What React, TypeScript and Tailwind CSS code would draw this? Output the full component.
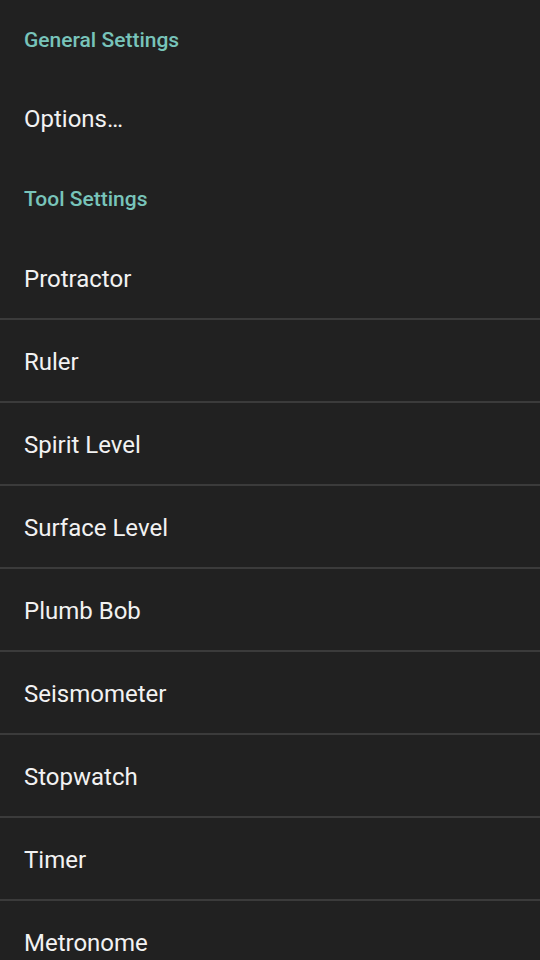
const tools = [
  "Protractor",
  "Ruler",
  "Spirit Level",
  "Surface Level",
  "Plumb Bob",
  "Seismometer",
  "Stopwatch",
  "Timer",
  "Metronome",
];

function Header({ title, tall }: { title: string; tall?: boolean }) {
  return (
    <div
      className={`flex items-center px-6 pt-[5px] text-[21px] font-medium text-[#78c4ba] ${
        tall ? "h-[79px]" : "h-[77px]"
      }`}
    >
      {title}
    </div>
  );
}

function Item({ label, divider }: { label: string; divider?: boolean }) {
  return (
    <div className={divider ? "border-b-2 border-[#3b3b3b]" : ""}>
      <div className="flex h-[81px] items-center px-6 pt-[2px] text-[24px] text-[#f2f2f2]">
        {label}
      </div>
    </div>
  );
}

export default function App() {
  return (
    <div
      className="h-[960px] w-[540px] overflow-hidden bg-[#212121]"
      style={{ fontFamily: "Roboto, 'Noto Sans', sans-serif" }}
    >
      <Header title="General Settings" />
      <Item label="Options…" />
      <Header title="Tool Settings" tall />
      {tools.map((t, i) => (
        <Item key={t} label={t} divider={i < tools.length - 1} />
      ))}
    </div>
  );
}
